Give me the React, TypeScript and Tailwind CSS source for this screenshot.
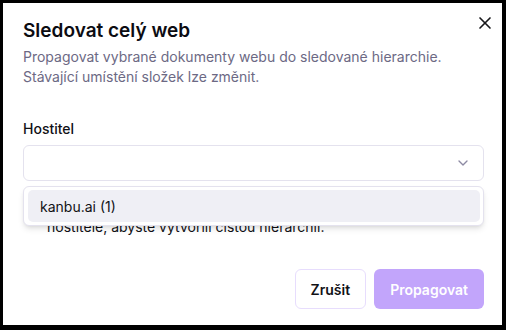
import { ChevronDown, X } from "lucide-react";

type HostOption = {
  name: string;
  count: number;
};

const hosts: HostOption[] = [{ name: "kanbu.ai", count: 1 }];

export default function App() {
  return (
    <div
      className="w-[506px] h-[330px] bg-black pt-[3px] pl-[3px] pr-[4px] pb-[5px]"
      style={{ fontFamily: "Inter, 'Liberation Sans', sans-serif" }}
    >
      <div className="relative flex flex-col w-full h-full bg-white pl-[20px] pr-[18px] pt-[14px] pb-[16px]">
        <button className="absolute top-[10px] right-[7px] text-[#18181b]">
          <X size={20} strokeWidth={2} />
        </button>

        <h2 className="text-[19px] leading-7 font-semibold text-[#0c0c12]">
          Sledovat celý web
        </h2>
        <p className="mt-[2px] text-[14px] leading-5 text-[#6c6984]">
          Propagovat vybrané dokumenty webu do sledované hierarchie.
          <br />
          Stávající umístění složek lze změnit.
        </p>

        <label className="mt-[32px] text-[14px] leading-5 font-medium text-[#111116]">
          Hostitel
        </label>
        <div className="relative mt-[6px]">
          <div className="flex items-center justify-end h-[36px] rounded-md border border-[#e4e2ee] bg-white px-3">
            <ChevronDown size={16} className="text-[#8d8aa3]" />
          </div>

          {/* open dropdown */}
          <div className="absolute left-0 right-0 top-[41px] z-10 rounded-md border border-[#e4e2ee] bg-white pt-[3px] pb-[3px] pl-[4px] pr-[3px] shadow-md">
            {hosts.map((host) => (
              <div
                key={host.name}
                className="flex items-center h-[32px] rounded-[5px] bg-[#efeff5] px-3 text-[14px] text-[#111116]"
              >
                {host.name} ({host.count})
              </div>
            ))}
          </div>

          <div className="flex items-start gap-2 mt-[16px]">
            <div className="mt-[2px] w-4 h-4 shrink-0 rounded-[4px] border border-[#c4b5f5]" />
            <p className="text-[14px] leading-5 text-[#111116]">
              Před propagací smazat stávající složky vybraného
              <br />
              hostitele, abyste vytvořili čistou hierarchii.
            </p>
          </div>
        </div>

        <div className="mt-auto flex justify-end gap-2">
          <button className="h-[40px] px-[15px] rounded-md border border-[#e7ddfd] bg-white text-[14px] font-semibold text-[#111116]">
            Zrušit
          </button>
          <button className="h-[40px] px-[16px] rounded-md bg-[#c2a5fb] text-[14px] font-semibold text-white">
            Propagovat
          </button>
        </div>
      </div>
    </div>
  );
}
